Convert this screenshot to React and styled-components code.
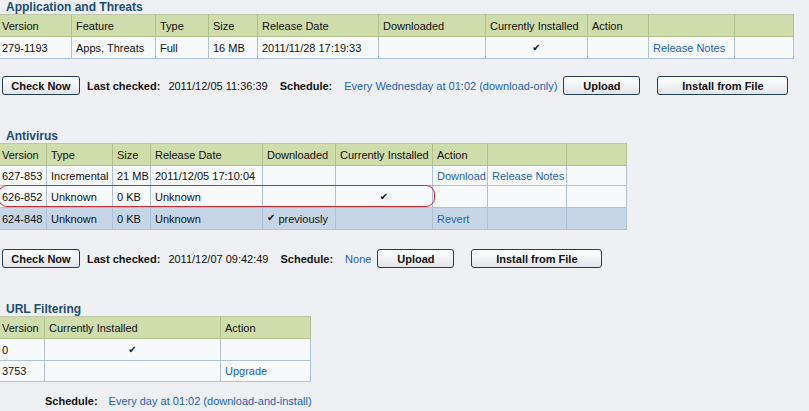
import React from "react";
import styled, { createGlobalStyle } from "styled-components";

const GlobalStyle = createGlobalStyle`
  body {
    margin: 0;
    background: #eef0f3;
    font-family: "Liberation Sans", Arial, sans-serif;
    font-size: 11px;
    color: #111;
    overflow: hidden;
  }
`;

const Page = styled.div`
  width: 809px;
  height: 411px;
  overflow: hidden;
`;

const Section = styled.section`
  margin-top: ${(p) => p.$top || 0}px;
`;

const Title = styled.h3`
  margin: 0 0 0 6px;
  font-size: 12px;
  line-height: 14px;
  font-weight: bold;
  color: #1d4d74;
`;

const TableWrap = styled.div`
  position: relative;
  margin-left: -3px;
  width: max-content;
`;

const Grid = styled.table`
  border-collapse: collapse;
  table-layout: fixed;
  width: ${(p) => p.$width}px;
`;

const HeadCell = styled.th`
  background: #cfdcab;
  border: 1px solid #b3c08e;
  border-top-color: #c0c7a8;
  height: 21px;
  padding: 0 4px;
  text-align: left;
  font-weight: normal;
  white-space: nowrap;
  overflow: hidden;
`;

const Row = styled.tr`
  background: ${(p) => (p.$selected ? "#c7d6e6" : "#f8f9fb")};
  height: ${(p) => p.$h || 22}px;
`;

const Cell = styled.td`
  border: 1px solid #aec2da;
  padding: 0 4px;
  white-space: nowrap;
  overflow: hidden;
  text-align: ${(p) => (p.$center ? "center" : "left")};
`;

const Link = styled.a`
  color: #1f63b3;
  text-decoration: none;
  cursor: pointer;
`;

const Check = styled.span`
  font-family: "DejaVu Sans", sans-serif;
  font-size: 10px;
  color: #111;
  position: relative;
  top: ${(p) => (p.$raised ? -2 : -1)}px;
`;

const Marker = styled.div`
  position: absolute;
  left: 1px;
  top: 42px;
  width: 437px;
  height: 22px;
  box-sizing: border-box;
  border: 1.5px solid #c62a33;
  border-radius: 9px;
  pointer-events: none;
`;

const Bar = styled.div`
  display: flex;
  align-items: center;
  margin-top: ${(p) => p.$top}px;
  padding-left: ${(p) => p.$indent || 2}px;
  height: 19px;
  white-space: nowrap;
`;

const Button = styled.button`
  width: ${(p) => p.$w}px;
  height: 19px;
  margin-left: ${(p) => p.$ml || 0}px;
  padding: 0;
  background: linear-gradient(#ffffff, #e3e5ea);
  border: 1px solid #223d5b;
  border-radius: 3px;
  font-family: "Liberation Sans", Arial, sans-serif;
  font-size: 11px;
  font-weight: bold;
  color: #111;
`;

const Label = styled.span`
  font-weight: bold;
  margin-left: ${(p) => p.$ml || 0}px;
`;

const Value = styled.span`
  margin-left: ${(p) => p.$ml || 0}px;
  color: ${(p) => (p.$link ? "#1f63b3" : "#111")};
`;

function renderCell(c) {
  if (c === "check") return <Check>✔</Check>;
  if (c === "prev")
    return (
      <>
        <Check $raised>✔</Check> previously
      </>
    );
  if (c && typeof c === "object") return <Link>{c.link}</Link>;
  return c;
}

function DataTable({ cols, heads, rows, marker }) {
  const width = cols.reduce((a, b) => a + b, 0);
  return (
    <TableWrap>
      <Grid $width={width}>
        <colgroup>
          {cols.map((w, i) => (
            <col key={i} style={{ width: w }} />
          ))}
        </colgroup>
        <thead>
          <tr>
            {heads.map((h, i) => (
              <HeadCell key={i}>{h}</HeadCell>
            ))}
          </tr>
        </thead>
        <tbody>
          {rows.map((r, i) => (
            <Row key={i} $selected={r.selected} $h={r.h}>
              {r.cells.map((c, j) => (
                <Cell key={j} $center={c === "check"}>
                  {renderCell(c)}
                </Cell>
              ))}
            </Row>
          ))}
        </tbody>
      </Grid>
      {marker && <Marker />}
    </TableWrap>
  );
}

function ActionBar({ top, date, schedule }) {
  return (
    <Bar $top={top}>
      <Button $w={78}>Check Now</Button>
      <Label $ml={7}>Last checked:</Label>
      <Value $ml={8}>{date}</Value>
      <Label $ml={12}>Schedule:</Label>
      <Value $ml={12} $link>
        {schedule}
      </Value>
      <Button $w={77} $ml={6}>
        Upload
      </Button>
      <Button $w={131} $ml={17}>
        Install from File
      </Button>
    </Bar>
  );
}

export default function App() {
  return (
    <Page>
      <GlobalStyle />
      <Section>
        <Title>Application and Threats</Title>
        <DataTable
          cols={[74, 84, 53, 49, 121, 107, 102, 61, 86, 59]}
          heads={["Version", "Feature", "Type", "Size", "Release Date", "Downloaded", "Currently Installed", "Action", "", ""]}
          rows={[
            {
              cells: ["279-1193", "Apps, Threats", "Full", "16 MB", "2011/11/28 17:19:33", "", "check", "", { link: "Release Notes" }, ""],
            },
          ]}
        />
        <ActionBar top={17} date="2011/12/05 11:36:39" schedule="Every Wednesday at 01:02 (download-only)" />
      </Section>

      <Section $top={34}>
        <Title>Antivirus</Title>
        <DataTable
          marker
          cols={[49, 66, 38, 112, 73, 97, 55, 79, 60]}
          heads={["Version", "Type", "Size", "Release Date", "Downloaded", "Currently Installed", "Action", "", ""]}
          rows={[
            {
              h: 20,
              cells: ["627-853", "Incremental", "21 MB", "2011/12/05 17:10:04", "", "", { link: "Download" }, { link: "Release Notes" }, ""],
            },
            { cells: ["626-852", "Unknown", "0 KB", "Unknown", "", "check", "", "", ""] },
            {
              selected: true,
              cells: ["624-848", "Unknown", "0 KB", "Unknown", "prev", "", { link: "Revert" }, "", ""],
            },
          ]}
        />
        <ActionBar top={19} date="2011/12/07 09:42:49" schedule="None" />
      </Section>

      <Section $top={34}>
        <Title>URL Filtering</Title>
        <DataTable
          cols={[47, 176, 90]}
          heads={["Version", "Currently Installed", "Action"]}
          rows={[
            { cells: ["0", "check", ""] },
            { h: 21, cells: ["3753", "", { link: "Upgrade" }] },
          ]}
        />
        <Bar $top={9} $indent={45}>
          <Label>Schedule:</Label>
          <Value $ml={11} $link>
            Every day at 01:02 (download-and-install)
          </Value>
        </Bar>
      </Section>
    </Page>
  );
}
